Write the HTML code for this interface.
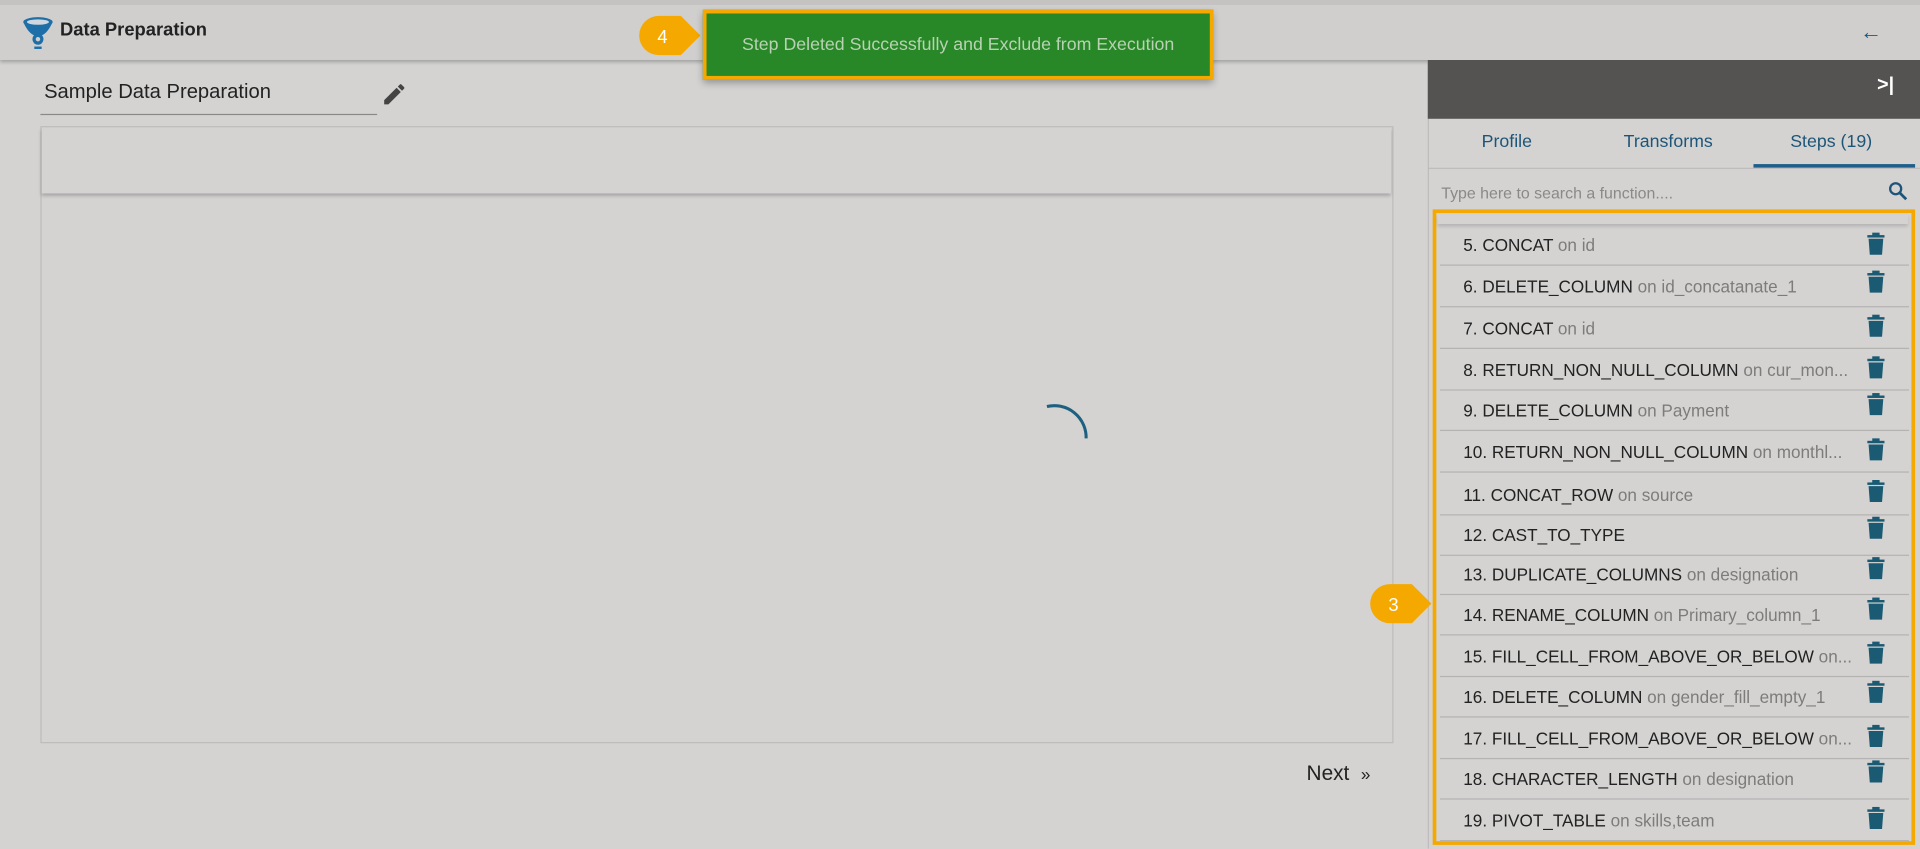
<!DOCTYPE html>
<html><head><meta charset="utf-8"><style>
html,body{margin:0;padding:0;width:1920px;height:849px;overflow:hidden;background:#d4d3d2;font-family:"Liberation Sans",sans-serif}
#w{position:absolute;left:0;top:0;width:1568px;height:693px;transform:scale(1.22449);transform-origin:0 0;background:#d4d3d2}
.a{position:absolute}
.row{position:absolute;left:1176px;width:383px;height:33px;border-bottom:1px solid #b4b3b2;font-size:14px;color:#222;line-height:34px;white-space:nowrap}
.row span.n{position:absolute;left:19px}
.row i{font-style:normal;color:#7d7c7b}
</style></head><body><div id="w">
<div class="a" style="left:0;top:0;width:1568px;height:4px;background:#c4c3c2"></div>
<div class="a" style="left:0;top:4px;width:1568px;height:45px;background:#d0cfce;box-shadow:0 2px 3px rgba(0,0,0,.25)"></div>
<svg class="a" style="left:18px;top:13px" width="28" height="28" viewBox="0 0 28 28"><ellipse cx="13" cy="5" rx="12" ry="4" fill="#1e6fa8"/><path d="M1 5 Q5 14 10 16 L16 16 Q21 14 25 5Z" fill="#1e6fa8"/><ellipse cx="13" cy="5" rx="9" ry="2.2" fill="#cfd8df"/><circle cx="13" cy="19" r="4.5" fill="#1e6fa8"/><circle cx="13" cy="19" r="1.8" fill="#d0cfce"/><rect x="10" y="25" width="6" height="2" fill="#1e6fa8"/></svg>
<div class="a" style="left:49px;top:16px;font-size:15px;font-weight:bold;color:#222">Data Preparation</div>
<div class="a" style="left:1519px;top:16px;font-size:18px;color:#1a5a7a">&#8592;</div>
<svg class="a" style="left:521px;top:12px" width="54" height="34"><path d="M17 1 H35 L51 17 L35 33 H17 A16 16 0 0 1 17 1Z" fill="#f5a900"/><text x="20" y="23" font-size="15" fill="#fff" font-family="Liberation Sans" text-anchor="middle">4</text></svg>
<div class="a" style="left:574px;top:8px;width:411px;height:51px;background:#288726;border:3px solid #f5a900;color:#b9d2b4;font-size:14.5px;line-height:52px;text-align:center;box-shadow:0 3px 6px rgba(0,0,0,.3)">Step Deleted Successfully and Exclude from Execution</div>
<div class="a" style="left:36px;top:66px;font-size:16.5px;color:#222">Sample Data Preparation</div>
<div class="a" style="left:33px;top:93px;width:275px;height:1px;background:#8a8988"></div>
<svg class="a" style="left:311px;top:66px" width="22" height="22" viewBox="0 0 24 24"><path d="M3 17.25V21h3.75L17.81 9.94l-3.75-3.75L3 17.25zM20.71 7.04a1 1 0 0 0 0-1.41l-2.34-2.34a1 1 0 0 0-1.41 0l-1.83 1.83 3.75 3.75 1.83-1.83z" fill="#444"/></svg>
<div class="a" style="left:33px;top:103px;width:1103px;height:502px;border:1px solid #bdbcbb"></div>
<div class="a" style="left:34px;top:104px;width:1102px;height:54px;background:#d4d3d2;box-shadow:0 2px 3px rgba(0,0,0,.25)"></div>
<svg class="a" style="left:845px;top:325px" width="50" height="40"><path d="M10 7 A26 26 0 0 1 42 33" stroke="#1d6080" stroke-width="2.5" fill="none"/></svg>
<div class="a" style="left:1067px;top:622px;font-size:17px;color:#222">Next &nbsp;<span style="font-size:14px">»</span></div>
<div class="a" style="left:1166px;top:49px;width:402px;height:644px;background:#d4d3d2;border-left:1px solid #bdbcbb"></div>
<div class="a" style="left:1166px;top:49px;width:402px;height:48px;background:#545352"></div>
<div class="a" style="left:1533px;top:61px;font-size:16px;color:#fff;font-weight:bold">&gt;|</div>
<div class="a" style="left:1210px;top:108px;font-size:14.5px;color:#1d5578">Profile</div>
<div class="a" style="left:1326px;top:108px;font-size:14.5px;color:#1d5578">Transforms</div>
<div class="a" style="left:1462px;top:108px;font-size:14.5px;color:#1d5578">Steps (19)</div>
<div class="a" style="left:1432px;top:134px;width:132px;height:3px;background:#1d5f8a"></div>
<div class="a" style="left:1166px;top:137px;width:402px;height:1px;background:#bdbcbb"></div>
<div class="a" style="left:1177px;top:150px;font-size:13px;color:#8a8988">Type here to search a function....</div>
<svg class="a" style="left:1541px;top:147px" width="18" height="18" viewBox="0 0 24 24"><circle cx="9.5" cy="9.5" r="6" stroke="#1d5578" stroke-width="2.5" fill="none"/><path d="M14 14l7 7" stroke="#1d5578" stroke-width="3"/></svg>
<div class="a" style="left:1170px;top:171px;width:388px;height:513px;border:3px solid #f5a900"></div>
<div class="a" style="left:1174px;top:175px;width:384px;height:8px;box-shadow:0 2px 3px rgba(0,0,0,.15)"></div>
<svg class="a" style="left:1118px;top:476px" width="54" height="34"><path d="M17 1 H35 L51 17 L35 33 H17 A16 16 0 0 1 17 1Z" fill="#f5a900"/><text x="20" y="23" font-size="15" fill="#fff" font-family="Liberation Sans" text-anchor="middle">3</text></svg>
<div class="row" style="top:183px"><span class="n">5. CONCAT <i>on id</i></span></div>
<div class="row" style="top:217px"><span class="n">6. DELETE_COLUMN <i>on id_concatanate_1</i></span></div>
<div class="row" style="top:251px"><span class="n">7. CONCAT <i>on id</i></span></div>
<div class="row" style="top:285px"><span class="n">8. RETURN_NON_NULL_COLUMN <i>on cur_mon...</i></span></div>
<div class="row" style="top:318px"><span class="n">9. DELETE_COLUMN <i>on Payment</i></span></div>
<div class="row" style="top:352px"><span class="n">10. RETURN_NON_NULL_COLUMN <i>on monthl...</i></span></div>
<div class="row" style="top:387px"><span class="n">11. CONCAT_ROW <i>on source</i></span></div>
<div class="row" style="top:420px"><span class="n">12. CAST_TO_TYPE</span></div>
<div class="row" style="top:452px"><span class="n">13. DUPLICATE_COLUMNS <i>on designation</i></span></div>
<div class="row" style="top:485px"><span class="n">14. RENAME_COLUMN <i>on Primary_column_1</i></span></div>
<div class="row" style="top:519px"><span class="n">15. FILL_CELL_FROM_ABOVE_OR_BELOW <i>on...</i></span></div>
<div class="row" style="top:552px"><span class="n">16. DELETE_COLUMN <i>on gender_fill_empty_1</i></span></div>
<div class="row" style="top:586px"><span class="n">17. FILL_CELL_FROM_ABOVE_OR_BELOW <i>on...</i></span></div>
<div class="row" style="top:619px"><span class="n">18. CHARACTER_LENGTH <i>on designation</i></span></div>
<div class="row" style="top:653px"><span class="n">19. PIVOT_TABLE <i>on skills,team</i></span></div>
<svg class="a" style="left:1524px;top:0" width="18" height="693">
<defs><g id="t"><rect x="1" y="2" width="14" height="2" fill="#1a5a72"/><rect x="5" y="0" width="6" height="3" fill="#1a5a72"/><path d="M2 5h12l-1 13H3z" fill="#1a5a72"/></g></defs>
<use href="#t" y="190"/><use href="#t" y="221"/><use href="#t" y="257"/><use href="#t" y="291"/><use href="#t" y="321"/><use href="#t" y="358"/><use href="#t" y="392"/><use href="#t" y="422"/><use href="#t" y="455"/><use href="#t" y="488"/><use href="#t" y="524"/><use href="#t" y="556"/><use href="#t" y="592"/><use href="#t" y="621"/><use href="#t" y="659"/>
</svg>
</div></body></html>
